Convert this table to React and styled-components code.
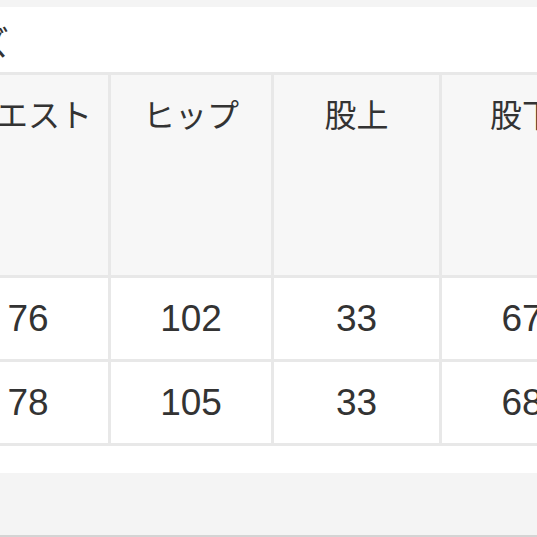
import React from 'react';
import styled, { createGlobalStyle } from 'styled-components';

var GlobalStyle = createGlobalStyle`
  body {
    margin: 0;
    background: #f4f4f4;
    font-family: "Liberation Sans", "Noto Sans CJK JP", sans-serif;
  }
`;

var Page = styled.div`
  width: 537px;
  height: 537px;
  overflow: hidden;
  display: flex;
  flex-direction: column;
  background: #f4f4f4;
  border-bottom: 2px solid #d4d4d4;
  box-sizing: border-box;
`;

var Card = styled.div`
  margin-top: 7px;
  height: 466px;
  background: #ffffff;
  display: flex;
  flex-direction: column;
`;

var Title = styled.div`
  height: 65px;
  display: flex;
  align-items: center;
  margin-left: -92px;
  padding-top: 4px;
  box-sizing: border-box;
  font-family: "Noto Sans CJK JP", sans-serif;
  font-size: 34px;
  color: #333333;
`;

var Table = styled.div`
  display: grid;
  grid-template-columns: 160px 160px 165px 160px;
  grid-template-rows: 200px 81px 81px;
  gap: 3px;
  padding: 3px 0;
  margin-left: -52px;
  width: 660px;
  background: #e8e8e8;
`;

var HeadCell = styled.div`
  background: #f7f7f7;
  text-align: center;
  padding-top: 22px;
  font-family: "Noto Sans CJK JP", sans-serif;
  font-size: 32px;
  line-height: 1;
  color: #333333;
`;

var Cell = styled.div`
  background: #ffffff;
  display: flex;
  align-items: center;
  justify-content: center;
  font-family: "Liberation Sans", Arial, sans-serif;
  font-size: 37px;
  color: #333333;
`;

var headers = ['ウエスト', 'ヒップ', '股上', '股下'];
var rows = [
  ['76', '102', '33', '67'],
  ['78', '105', '33', '68']
];

var App = function() {
  return (
    <Page>
      <GlobalStyle />
      <Card>
        <Title>サイズ</Title>
        <Table>
          {headers.map((h) => <HeadCell key={h}>{h}</HeadCell>)}
          {rows.map((row, i) => row.map((v, j) => <Cell key={i + '-' + j}>{v}</Cell>))}
        </Table>
      </Card>
    </Page>
  );
};

export default App;
